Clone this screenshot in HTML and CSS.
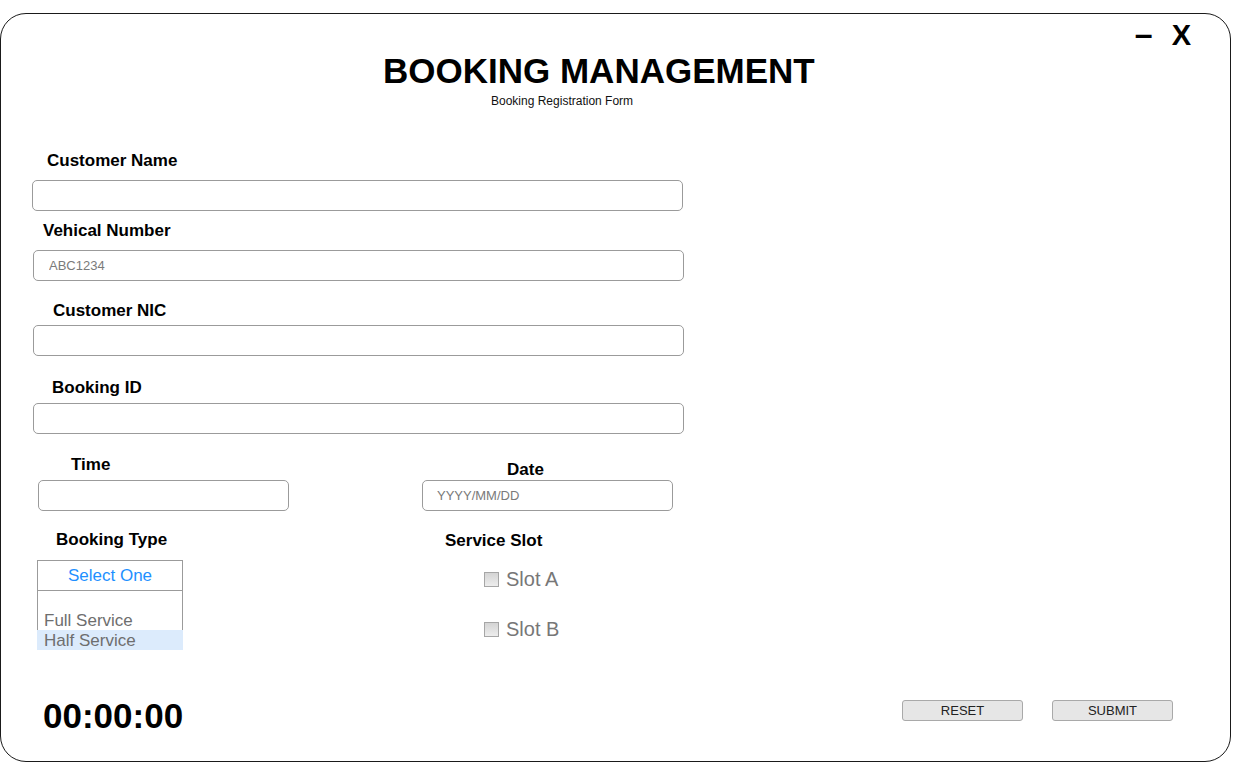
FILE: index.html
```html
<!DOCTYPE html>
<html lang="en">
<head>
<meta charset="utf-8">
<title>Booking Management</title>
<link rel="stylesheet" href="styles.css">
</head>
<body>
<div class="window">
  <div class="controls">
    <span class="ctl ctl-min">–</span>
    <span class="ctl ctl-close">X</span>
  </div>
  <h1 class="title">BOOKING MANAGEMENT</h1>
  <p class="subtitle">Booking Registration Form</p>

  <div class="form">
    <label class="label lbl-name">Customer Name</label>
    <input class="field field-name" type="text">

    <label class="label lbl-vehicle">Vehical Number</label>
    <input class="field field-vehicle" type="text" placeholder="ABC1234">

    <label class="label lbl-nic">Customer NIC</label>
    <input class="field field-nic" type="text">

    <label class="label lbl-id">Booking ID</label>
    <input class="field field-id" type="text">

    <div class="row row-datetime">
      <div class="col-left">
        <label class="label lbl-time">Time</label>
        <input class="field field-time" type="text">
      </div>
      <div class="col-right">
        <label class="label lbl-date">Date</label>
        <input class="field field-date" type="text" placeholder="YYYY/MM/DD">
      </div>
    </div>

    <div class="row row-type">
      <div class="col-left">
        <label class="label lbl-type">Booking Type</label>
        <div class="listbox">
          <div class="list-head">Select One</div>
          <div class="list-body">
            <div class="opt">Full Service</div>
            <div class="opt opt-selected">Half Service</div>
          </div>
        </div>
      </div>
      <div class="col-right">
        <label class="label lbl-slot">Service Slot</label>
        <div class="slot slot-a"><span class="check"></span><span>Slot A</span></div>
        <div class="slot slot-b"><span class="check"></span><span>Slot B</span></div>
      </div>
    </div>
  </div>

  <div class="footer">
    <div class="timer">00:00:00</div>
    <div class="actions">
      <button class="btn" type="button">RESET</button>
      <button class="btn" type="button">SUBMIT</button>
    </div>
  </div>
</div>
</body>
</html>
```
FILE: styles.css
```css
* { box-sizing: border-box; }

html, body {
  margin: 0;
  padding: 0;
  background: #ffffff;
}

body {
  font-family: "Liberation Sans", Arial, sans-serif;
  color: #000;
}

.window {
  margin-top: 13px;
  width: 1231px;
  height: 749px;
  border: 1px solid #1a1a1a;
  border-radius: 26px;
  display: flex;
  flex-direction: column;
  background: #fff;
}

/* window controls */
.controls {
  margin-top: 5px;
  height: 32px;
  display: flex;
  justify-content: flex-end;
  align-items: baseline;
  gap: 19px;
  padding-right: 39px;
  font-weight: bold;
  line-height: 30px;
}

.ctl-min {
  font-size: 32px;
}

.ctl-close {
  font-size: 29px;
}

.title {
  margin: 0 0 0 382px;
  font-size: 35px;
  line-height: 40px;
  font-weight: bold;
}

.subtitle {
  margin: 3px 0 0 490px;
  font-size: 12px;
  line-height: 14px;
  color: #111;
}

/* form */
.form {
  display: flex;
  flex-direction: column;
  align-items: flex-start;
}

.label {
  display: block;
  font-size: 17px;
  line-height: 20px;
  font-weight: bold;
}

.field {
  display: block;
  height: 31px;
  border: 1px solid #9b9b9b;
  border-radius: 5px;
  background: #fff;
  padding: 0 15px;
  font-family: "Liberation Sans", Arial, sans-serif;
  font-size: 13px;
  color: #333;
  outline: none;
}

.field::placeholder { color: #7a7a7a; }

.lbl-name { margin: 43px 0 0 46px; }
.field-name { margin: 9px 0 0 31px; width: 651px; }

.lbl-vehicle { margin: 10px 0 0 42px; }
.field-vehicle { margin: 9px 0 0 32px; width: 651px; }

.lbl-nic { margin: 20px 0 0 52px; }
.field-nic { margin: 4px 0 0 32px; width: 651px; }

.lbl-id { margin: 22px 0 0 51px; }
.field-id { margin: 5px 0 0 32px; width: 651px; }

.row {
  display: flex;
  align-items: flex-start;
}

.col-left { width: 400px; }
.col-right { flex: 1; }

.row-datetime { margin-top: 21px; }
.lbl-time { margin-left: 70px; }
.field-time { margin: 5px 0 0 37px; width: 251px; }
.lbl-date { margin: 5px 0 0 106px; }
.field-date { margin: 0 0 0 21px; width: 251px; padding-left: 14px; }

.row-type { margin-top: 19px; }
.lbl-type { margin-left: 55px; }
.lbl-slot { margin: 1px 0 0 44px; }

/* list box */
.listbox {
  margin: 10px 0 0 36px;
  width: 146px;
  border: 1px solid #9b9b9b;
  border-bottom: none;
}

.list-head {
  height: 30px;
  border-bottom: 1px solid #9b9b9b;
  text-align: center;
  color: #1e90ff;
  font-size: 17px;
  line-height: 29px;
}

.list-body {
  height: 50px;
  padding-top: 19px;
}

.opt {
  height: 20px;
  font-size: 17px;
  line-height: 21px;
  color: #6e6e6e;
  padding-left: 6px;
}

.opt-selected {
  margin: 0 -1px;
  padding-left: 7px;
  background: #dcebfc;
  position: relative;
}

/* checkboxes */
.slot {
  display: flex;
  align-items: center;
  gap: 7px;
  height: 24px;
  margin-left: 83px;
  font-size: 20px;
  color: #777;
}

.slot-a { margin-top: 16px; }
.slot-b { margin-top: 26px; }

.check {
  width: 15px;
  height: 15px;
  border: 1px solid #a6a6a6;
  background: linear-gradient(#d4d4d4, #ededed);
}

/* footer */
.footer {
  margin-top: auto;
  display: flex;
  align-items: flex-start;
  padding: 0 57px 25px 42px;
}

.timer {
  font-size: 35px;
  line-height: 40px;
  font-weight: bold;
}

.actions {
  margin: 4px 0 0 auto;
  display: flex;
  gap: 29px;
}

.btn {
  width: 121px;
  height: 21px;
  padding: 0;
  border: 1px solid #a9a9a9;
  border-radius: 3px;
  background: #e6e6e6;
  font-family: "Liberation Sans", Arial, sans-serif;
  font-size: 13px;
  line-height: 19px;
  color: #222;
}
```
